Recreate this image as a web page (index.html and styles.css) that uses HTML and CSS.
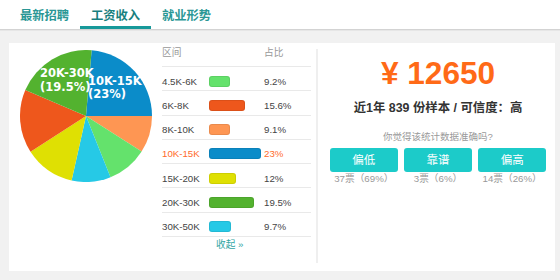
FILE: index.html
```html
<!DOCTYPE html>
<html lang="zh-CN">
<head>
<meta charset="utf-8">
<title>工资收入</title>
<link rel="stylesheet" href="styles.css">
</head>
<body>
<nav class="tabs">
  <a class="tab">最新招聘</a>
  <a class="tab tab-active">工资收入</a>
  <a class="tab">就业形势</a>
</nav>
<main class="main">
  <section class="panel">
    <div class="chart">
      <svg class="pie" viewBox="0 0 132 132" width="132" height="132">
        <path fill="#0b8cc9" d="M66 66 L71.64 0.24 A66 66 0 0 1 132 66 Z"/>
        <path fill="#fe9653" d="M66 66 L132 66 A66 66 0 0 1 121.6 101.56 Z"/>
        <path fill="#64e26c" d="M66 66 L121.6 101.56 A66 66 0 0 1 90.51 127.28 Z"/>
        <path fill="#26c9e6" d="M66 66 L90.51 127.28 A66 66 0 0 1 51.6 130.41 Z"/>
        <path fill="#dfe003" d="M66 66 L51.6 130.41 A66 66 0 0 1 10.52 101.75 Z"/>
        <path fill="#ee571c" d="M66 66 L10.52 101.75 A66 66 0 0 1 5.29 40.11 Z"/>
        <path fill="#53b22f" d="M66 66 L5.29 40.11 A66 66 0 0 1 71.64 0.24 Z"/>
      </svg>
      <div class="pie-label label-a">20K-30K<br>(19.5%)</div>
      <div class="pie-label label-b">10K-15K<br>(23%)</div>
    </div>

    <div class="table">
      <div class="thead">
        <span class="c-range">区间</span><span class="c-bar"></span><span class="c-pct">占比</span>
      </div>
      <div class="row"><span class="c-range">4.5K-6K</span><span class="c-bar"><i class="bar b-lgreen" style="width:21px"></i></span><span class="c-pct">9.2%</span></div>
      <div class="row"><span class="c-range">6K-8K</span><span class="c-bar"><i class="bar b-red" style="width:36px"></i></span><span class="c-pct">15.6%</span></div>
      <div class="row"><span class="c-range">8K-10K</span><span class="c-bar"><i class="bar b-orange" style="width:21px"></i></span><span class="c-pct">9.1%</span></div>
      <div class="row row-hl"><span class="c-range">10K-15K</span><span class="c-bar"><i class="bar b-blue" style="width:52px"></i></span><span class="c-pct">23%</span></div>
      <div class="row"><span class="c-range">15K-20K</span><span class="c-bar"><i class="bar b-yellow" style="width:27px"></i></span><span class="c-pct">12%</span></div>
      <div class="row"><span class="c-range">20K-30K</span><span class="c-bar"><i class="bar b-green" style="width:45px"></i></span><span class="c-pct">19.5%</span></div>
      <div class="row"><span class="c-range">30K-50K</span><span class="c-bar"><i class="bar b-cyan" style="width:22px"></i></span><span class="c-pct">9.7%</span></div>
      <a class="collapse">收起 »</a>
    </div>

    <div class="divider"></div>

    <div class="summary">
      <div class="price">¥ 12650</div>
      <div class="sub">近1年 839 份样本 / 可信度：高</div>
      <div class="question">你觉得该统计数据准确吗?</div>
      <div class="buttons">
        <a class="btn">偏低</a>
        <a class="btn">靠谱</a>
        <a class="btn">偏高</a>
      </div>
      <div class="votes">
        <span>37票（69%）</span>
        <span>3票（6%）</span>
        <span>14票（26%）</span>
      </div>
    </div>
  </section>
</main>
</body>
</html>
```
FILE: styles.css
```css
html, body {
  margin: 0;
  padding: 0;
}
body {
  background: #f1f1f1;
  font-family: "Liberation Sans", "Noto Sans CJK SC", sans-serif;
  color: #444;
  width: 560px;
  height: 280px;
  overflow: hidden;
}
a { text-decoration: none; }

.tabs {
  display: flex;
  height: 29px;
  padding-left: 9px;
  background: #fff;
  border-bottom: 1px solid #d3d3d3;
  box-shadow: 0 1px 0 #e6e6e6;
}
.tab {
  width: 71px;
  height: 29px;
  box-sizing: border-box;
  padding-top: 4px;
  line-height: 22px;
  text-align: center;
  font-family: "Noto Sans CJK SC", sans-serif;
  font-weight: bold;
  font-size: 12.3px;
  color: #2a9795;
}
.tab-active {
  color: #187f7e;
  border-bottom: 3px solid #17999a;
}

.main {
  padding: 13px 5px 9px 9px;
}
.panel {
  display: flex;
  align-items: flex-start;
  height: 228px;
  background: #fff;
}

.chart {
  position: relative;
  width: 132px;
  height: 132px;
  margin: 7px 0 0 11px;
}
.pie { display: block; }
.pie-label {
  position: absolute;
  font-family: "DejaVu Sans", sans-serif;
  font-weight: bold;
  font-size: 11.5px;
  line-height: 13.5px;
  color: #fff;
  white-space: nowrap;
}
.label-a { left: 20px; top: 17px; }
.label-b { left: 68px; top: 24.5px; }

.table {
  width: 149px;
  margin-left: 10px;
  font-size: 9.7px;
}
.thead {
  display: flex;
  height: 23px;
  box-sizing: border-box;
  padding-top: 2px;
  line-height: 15px;
  color: #999;
  border-bottom: 1px solid #e9e9e9;
  box-sizing: content-box;
  height: 21px;
}
.row {
  display: flex;
  align-items: center;
  height: 24.25px;
  box-sizing: border-box;
  padding-top: 5px;
  border-bottom: 1px solid #e9e9e9;
  color: #444;
}
.row-hl { color: #ff6b2b; }
.c-range { width: 47px; }
.c-bar { width: 55px; display: flex; align-items: center; }
.c-pct { flex: 1; }
.bar {
  display: block;
  height: 11px;
  border-radius: 3px;
  box-shadow: inset 0 0 0 1px rgba(0, 0, 0, 0.08);
}
.b-lgreen { background: #64e26c; }
.b-red { background: #ee571c; }
.b-orange { background: #fe9653; }
.b-blue { background: #0b8cc9; }
.b-yellow { background: #dfe003; }
.b-green { background: #53b22f; }
.b-cyan { background: #26c9e6; }
.collapse {
  display: block;
  padding-left: 54px;
  line-height: 16px;
  color: #32a6a4;
}

.divider {
  align-self: stretch;
  width: 2px;
  margin: 6px 0 8px 5px;
  background: #efefef;
}

.summary {
  flex: 1;
  padding: 12.4px 9px 0 12px;
  text-align: center;
}
.price {
  font-weight: bold;
  font-size: 31.6px;
  line-height: 36px;
  color: #ff6a17;
}
.sub {
  margin-top: 8px;
  font-weight: bold;
  font-size: 12.4px;
  line-height: 18px;
  color: #333;
}
.question {
  margin-top: 12.5px;
  font-size: 9.5px;
  line-height: 14px;
  color: #999;
}
.buttons {
  display: flex;
  gap: 6.5px;
  margin-top: 3.7px;
}
.btn {
  flex: 1;
  height: 24.5px;
  line-height: 24.5px;
  border-radius: 3px;
  background: #1ccbc9;
  color: #fff;
  font-size: 11.5px;
}
.votes {
  display: flex;
  gap: 6.5px;
  margin-top: 1px;
  font-size: 9.7px;
  line-height: 12px;
  color: #999;
}
.votes span { flex: 1; }
```
